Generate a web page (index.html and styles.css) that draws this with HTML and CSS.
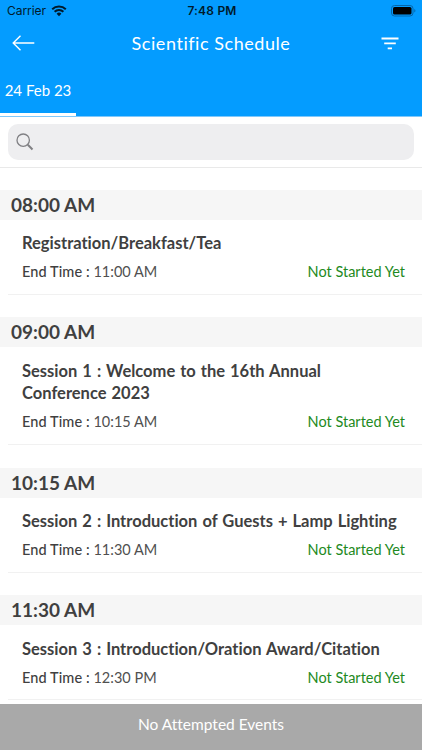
FILE: index.html
```html
<!DOCTYPE html>
<html lang="en">
<head>
    <meta charset="UTF-8">
    <meta name="viewport" content="width=device-width, initial-scale=1.0">
    <title>Scientific Schedule</title>
    <link rel="stylesheet" href="styles.css">
</head>
<body>
    <div class="app">
        <header class="header">
            <div class="status-bar">
                <div class="carrier">
                    <span>Carrier</span>
                    <svg width="16" height="12" viewBox="0 0 16 12">
                        <path d="M1.2 4.2a9.8 9.8 0 0 1 13.6 0M3.6 6.8a6.3 6.3 0 0 1 8.8 0" fill="none" stroke="#001a2b" stroke-width="2"/>
                        <path d="M8 11.2 5.6 8.8a3.4 3.4 0 0 1 4.8 0z" fill="#001a2b"/>
                    </svg>
                </div>
                <span class="clock">7:48 PM</span>
                <svg class="battery" width="26" height="12" viewBox="0 0 26 12">
                    <rect x=".5" y=".5" width="21.5" height="10.5" rx="3" fill="none" stroke="#0566aa"/>
                    <rect x="2" y="2" width="18.5" height="7.5" rx="1.6" fill="#000"/>
                    <path d="M23.3 4v3.6c1.5-.6 1.5-3 0-3.6z" fill="#0566aa"/>
                </svg>
            </div>
            <div class="nav-bar">
                <svg class="back" width="23" height="16" viewBox="0 0 23 16">
                    <path d="M22.3 8H1.2M8.5 .8 1.2 8l7.3 7.2" fill="none" stroke="#fff" stroke-width="1.4"/>
                </svg>
                <h1>Scientific Schedule</h1>
                <svg class="filter" width="18" height="13" viewBox="0 0 18 13">
                    <path d="M.5 1.5h17M3.2 6.4h11.6M6.7 11.3h4.3" fill="none" stroke="#fff" stroke-width="1.8"/>
                </svg>
            </div>
            <div class="tabs">
                <div class="tab active">24 Feb 23</div>
            </div>
        </header>

        <div class="search">
            <div class="search-box">
                <svg width="18" height="18" viewBox="0 0 18 18">
                    <circle cx="7.2" cy="7.2" r="6.2" fill="none" stroke="#808084" stroke-width="1.3"/>
                    <path d="M11.8 11.8 16.5 16.5" stroke="#808084" stroke-width="2"/>
                </svg>
            </div>
        </div>

        <main class="schedule">
            <section class="slot">
                <h2>08:00 AM</h2>
                <div class="event">
                    <h3>Registration/Breakfast/Tea</h3>
                    <div class="details">
                        <p><b>End Time :</b> <span>11:00 AM</span></p>
                        <p class="status">Not Started Yet</p>
                    </div>
                </div>
            </section>
            <section class="slot">
                <h2>09:00 AM</h2>
                <div class="event">
                    <h3>Session 1 : Welcome to the 16th Annual<br>Conference 2023</h3>
                    <div class="details">
                        <p><b>End Time :</b> <span>10:15 AM</span></p>
                        <p class="status">Not Started Yet</p>
                    </div>
                </div>
            </section>
            <section class="slot">
                <h2>10:15 AM</h2>
                <div class="event">
                    <h3>Session 2 : Introduction of Guests + Lamp Lighting</h3>
                    <div class="details">
                        <p><b>End Time :</b> <span>11:30 AM</span></p>
                        <p class="status">Not Started Yet</p>
                    </div>
                </div>
            </section>
            <section class="slot">
                <h2>11:30 AM</h2>
                <div class="event">
                    <h3>Session 3 : Introduction/Oration Award/Citation</h3>
                    <div class="details">
                        <p><b>End Time :</b> <span>12:30 PM</span></p>
                        <p class="status">Not Started Yet</p>
                    </div>
                </div>
            </section>
        </main>

        <footer class="footer">No Attempted Events</footer>
    </div>
</body>
</html>
```
FILE: styles.css
```css
* {
    box-sizing: border-box;
}
body {
    margin: 0;
    font-family: Lato, "Open Sans", sans-serif;
    font-variant-ligatures: none;
    color: #404040;
    background-color: #fff;
}
h1, h2, h3, p {
    margin: 0;
}
svg {
    display: block;
}
.app {
    display: flex;
    flex-direction: column;
    height: 750px;
    overflow: hidden;
}
.header {
    flex: none;
    height: 117px;
    background-color: #049cff;
    border-bottom: 1px solid #7fc8fb;
    color: #fff;
}
.status-bar {
    display: grid;
    grid-template-columns: 1fr auto 1fr;
    align-items: center;
    height: 22px;
    padding: 0 5px 1px 7px;
    font-family: Inter, sans-serif;
    font-size: 12px;
    color: #001a2b;
}
.carrier {
    display: flex;
    align-items: center;
    gap: 5px;
    letter-spacing: -0.05px;
}
.clock {
    font-weight: 600;
    letter-spacing: 0.2px;
}
.battery {
    justify-self: end;
}
.nav-bar {
    display: flex;
    align-items: center;
    justify-content: space-between;
    height: 42px;
    padding: 0 23px 0 12px;
}
.nav-bar h1 {
    padding-left: 6px;
    font-size: 18px;
    font-weight: 400;
    letter-spacing: 0.55px;
}
.tabs {
    display: flex;
    height: 52px;
}
.tab {
    width: 76px;
    padding-top: 16px;
    font-size: 15px;
    line-height: 20px;
    text-align: center;
    white-space: nowrap;
}
.tab.active {
    border-bottom: 3px solid #fff;
}
.search {
    flex: none;
    height: 51px;
    padding: 6.7px 8.5px 0 8.3px;
    border-bottom: 1px solid #e9e9e9;
}
.search-box {
    height: 36.3px;
    padding: 9.3px 7.5px;
    background-color: #eeeef0;
    border-radius: 10px;
}
.schedule {
    flex: 1;
    min-height: 0;
    padding-top: 21.7px;
    overflow: hidden;
}
.slot {
    padding-bottom: 22.6px;
}
.slot h2 {
    height: 30px;
    padding-left: 11px;
    background-color: #f6f6f6;
    font-size: 19px;
    font-weight: 700;
    line-height: 30px;
}
.event {
    margin-left: 8px;
    padding: 12.7px 17px 11.6px 14px;
    border-bottom: 1px solid #f1f1f1;
}
.event h3 {
    font-size: 16.5px;
    font-weight: 700;
    line-height: 22.3px;
    word-spacing: 1px;
    white-space: nowrap;
}
.details {
    display: flex;
    justify-content: space-between;
    margin-top: 7.6px;
    font-size: 14.5px;
    line-height: 20px;
}
.details b {
    font-weight: 500;
    letter-spacing: 0.1px;
}
.details span {
    color: #505050;
}
.details .status {
    color: #1e8a22;
}
.footer {
    flex: none;
    height: 46px;
    background-color: #a9a9a9;
    color: #fff;
    font-size: 15.5px;
    line-height: 41px;
    text-align: center;
}
```
